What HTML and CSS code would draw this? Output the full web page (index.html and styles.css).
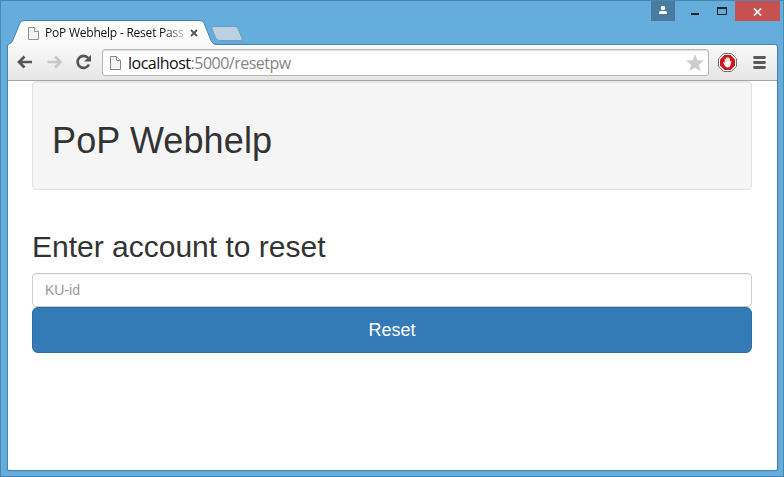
FILE: index.html
```html
<!DOCTYPE html>
<html lang="en">
<head>
<meta charset="utf-8">
<title>PoP Webhelp - Reset Password</title>
<link rel="stylesheet" href="styles.css">
</head>
<body>
<div class="window">
  <header class="titlebar">
    <div class="tab">
      <svg class="tab-shape" width="212" height="26" viewBox="0 0 212 26">
        <defs><linearGradient id="tabfill" x1="0" y1="0" x2="0" y2="1"><stop offset="0" stop-color="#fff"/><stop offset="1" stop-color="#f9f9f9"/></linearGradient></defs>
        <path d="M1 26V24.500Q4 24 5.500 21L13 3Q14 .5 17 .5H193Q196 .5 197 3L204 20.500Q206 25 210 25V26Z" fill="url(#tabfill)"/>
        <path d="M.5 26Q1 24 3 23.500Q4.500 23 5.500 21L13 3Q14 .5 17 .5H193Q196 .5 197 3L204 20.500Q205.500 24.500 210 24.500" fill="none" stroke="#4983a7"/>
      </svg>
      <svg class="page-icon" width="13" height="15" viewBox="0 0 13 15"><path d="M1.500 1.500H7.500L11.500 5.500V13.500H1.500Z" fill="#f5f5f5" stroke="#929292"/><path d="M7.500 1.500V5.500H11.500" fill="#fff" stroke="#929292"/></svg>
      <span class="tab-title">PoP Webhelp - Reset Pass</span>
      <svg class="tab-close" width="8" height="8" viewBox="0 0 8 8"><path d="M1 1L7 7M7 1L1 7" stroke="#555" stroke-width="1.800"/></svg>
    </div>
    <svg class="new-tab" width="34" height="17" viewBox="0 0 34 17"><path d="M3.500 1.500H25Q27 1.500 28 3.500L32 13Q33 15.500 31 15.500H9.500Q7 15.500 6 13.500L2 4Q1 1.500 3.500 1.500Z" fill="#b9d1e0" stroke="#6c9dbc"/></svg>
    <div class="controls">
      <div class="user"><svg width="24" height="20" viewBox="0 0 24 20"><circle cx="12" cy="7" r="2.300" fill="#fff"/><path d="M8 13V11.800Q8 10 10 10H14Q16 10 16 11.800V13Z" fill="#fff"/></svg></div>
      <svg class="minmax" width="60" height="20" viewBox="0 0 60 20"><path d="M16 12H24V14H16Z" fill="#222"/><path d="M42 6H52V14H42ZM43 8V13H51V8Z" fill="#222" fill-rule="evenodd"/></svg>
      <div class="close"><svg width="9" height="8" viewBox="0 0 9 8"><path d="M1 .5L8 7.500M8 .5L1 7.500" stroke="#fff" stroke-width="1.700"/></svg></div>
    </div>
  </header>
  <div class="viewport">
    <nav class="toolbar">
      <svg class="nav-icons" width="86" height="20" viewBox="0 0 86 20">
        <path d="M24 10H11M16.500 4.500L11 10L16.500 15.500" fill="none" stroke="#565656" stroke-width="2.700"/>
        <path d="M39.500 10H52.500M47 4.500L52.500 10L47 15.500" fill="none" stroke="#c8c8c8" stroke-width="2.700"/>
        <path d="M80.200 6A6 6 0 1 0 81 12.500" fill="none" stroke="#555" stroke-width="2.600"/><path d="M83 3V9.500H76Z" fill="#555"/>
      </svg>
      <div class="address">
        <svg class="page-icon" width="13" height="16" viewBox="0 0 13 16"><path d="M1.500 1.500H7.500L11.500 5.500V14.500H1.500Z" fill="#f5f5f5" stroke="#858585"/><path d="M7.500 1.500V5.500H11.500" fill="#fff" stroke="#858585"/></svg>
        <span class="url">localhost<span class="path">:5000/resetpw</span></span>
        <svg class="star" width="18" height="18" viewBox="0 0 18 18"><path d="M9 0L11.400 6.200L18 6.600L12.900 10.800L14.600 17.300L9 13.700L3.400 17.300L5.100 10.800L0 6.600L6.600 6.200Z" fill="#cdcdcd"/></svg>
      </div>
      <svg class="stop" width="19" height="19" viewBox="0 0 19 19"><path d="M5.700.5H13.300L18.500 5.700V13.300L13.300 18.500H5.700L.5 13.300V5.700Z" fill="#fff" stroke="#6f6f6f"/><path d="M6.400 2H12.600L17 6.400V12.600L12.600 17H6.400L2 12.600V6.400Z" fill="#d4141c"/><path d="M5 9.500Q5.500 8.800 6.700 9.800V6Q7.300 5.300 7.900 6V5Q8.500 4.200 9.200 5V4.500Q10 3.800 10.700 4.500V5.500Q11.400 4.900 12 5.700V8.500Q12.800 7.500 13.400 8.200L12.500 12Q12 14.500 10 14.500Q7.500 14.500 6.500 12.200Z" fill="#fff"/><path d="M7.900 6V8.500M9.300 5V8.500M10.700 5.500V8.500" stroke="#e9979a" stroke-width=".5"/></svg>
      <svg class="menu" width="13" height="13" viewBox="0 0 13 13"><path d="M1.500 1.500H11.500M1.500 6.500H11.500M1.500 11.500H11.500" stroke="#595959" stroke-width="2.800" stroke-linecap="round"/></svg>
    </nav>
    <main class="page">
      <div class="well"><h1>PoP Webhelp</h1></div>
      <h2>Enter account to reset</h2>
      <form class="reset-form">
        <input type="text" placeholder="KU-id" aria-label="KU-id">
        <button type="button">Reset</button>
      </form>
    </main>
  </div>
</div>
</body>
</html>
```

FILE: styles.css
```css
* { box-sizing: border-box; }

body {
  margin: 0;
  overflow: hidden;
  font-family: "Liberation Sans", Arial, sans-serif;
  color: #333;
}

svg { display: block; flex: none; }

.window {
  display: flex;
  flex-direction: column;
  width: 784px;
  height: 477px;
  padding: 0 5px 5px 6px;
  border: 1px solid #4b87ac;
  background: #65addc;
}

.titlebar {
  display: flex;
  height: 43px;
  flex: none;
  margin-right: -2px;
}

.tab {
  position: relative;
  z-index: 1;
  display: flex;
  align-items: center;
  width: 203px;
  height: 26px;
  margin-top: 19px;
  padding-left: 20px;
}

.tab-shape { position: absolute; left: 0; top: 0; }
.tab .page-icon { position: relative; }

.tab-title {
  position: relative;
  width: 140px;
  margin-left: 5px;
  white-space: nowrap;
  font: 12px/18px "Open Sans", sans-serif;
  letter-spacing: -0.22px;
  color: #111;
  -webkit-mask-image: linear-gradient(to right, #000 120px, transparent 145px);
  mask-image: linear-gradient(to right, #000 120px, transparent 145px);
}

.tab-close { position: relative; margin-left: 5px; }

.new-tab { margin-top: 24px; }

.controls {
  display: flex;
  height: 20px;
  margin-left: auto;
}

.user { background: #487c9f; }

.close {
  display: flex;
  align-items: center;
  justify-content: center;
  width: 45px;
  padding-top: 2px;
  background: #c75050;
}

.viewport {
  flex: 1;
  min-height: 0;
  border: 1px solid #4983a7;
  border-radius: 3px 4px 2px 2px;
  background: #fff;
  box-shadow: 0 0 1px #3e799d;
}

.toolbar {
  display: flex;
  align-items: center;
  height: 36px;
  padding-right: 11px;
  border-bottom: 1px solid #a5a5a5;
  border-radius: 0 3px 0 0;
  background: linear-gradient(#f9f9f9, #e5e5e5);
}

.nav-icons { margin: 0 8px 1px 0; }

.address {
  display: flex;
  flex: 1;
  align-items: center;
  height: 27px;
  padding: 0 4px 0 6px;
  border: 1px solid #b5b5b5;
  border-radius: 3px;
  background: #fff;
  box-shadow: inset 0 1px 1px #ddd;
}

.url {
  margin-left: 6px;
  font: 16px/22px "Open Sans", sans-serif;
  letter-spacing: -0.5px;
  color: #111;
}

.path { color: #858585; }
.star { margin-left: auto; }
.stop { margin: 0 16px 0 9px; }

.page { padding: 0 25px 0 24px; }

.well {
  height: 109px;
  padding: 39px 19px 0;
  border: 1px solid #e3e3e3;
  border-radius: 4px;
  background: #f5f5f5;
  box-shadow: inset 0 1px 1px rgba(0, 0, 0, 0.05);
}

h1, h2 {
  margin: 0;
  font-weight: 400;
  line-height: 1.1;
}

h1 { font-size: 36px; letter-spacing: 0.12px; }
h2 { margin: 40px 0 10px; font-size: 30px; }

.reset-form {
  display: flex;
  flex-direction: column;
}

.reset-form input {
  height: 34px;
  padding: 6px 12px;
  border: 1px solid #ccc;
  border-radius: 4px;
  font: 14px/20px "Liberation Sans", Arial, sans-serif;
  box-shadow: inset 0 1px 1px rgba(0, 0, 0, 0.075);
}

.reset-form input::placeholder { color: #999; opacity: 1; }

.reset-form button {
  height: 46px;
  border: 1px solid #2e6da4;
  border-radius: 6px;
  background: #337ab7;
  color: #fff;
  font: 18px/24px "Liberation Sans", Arial, sans-serif;
}
```
